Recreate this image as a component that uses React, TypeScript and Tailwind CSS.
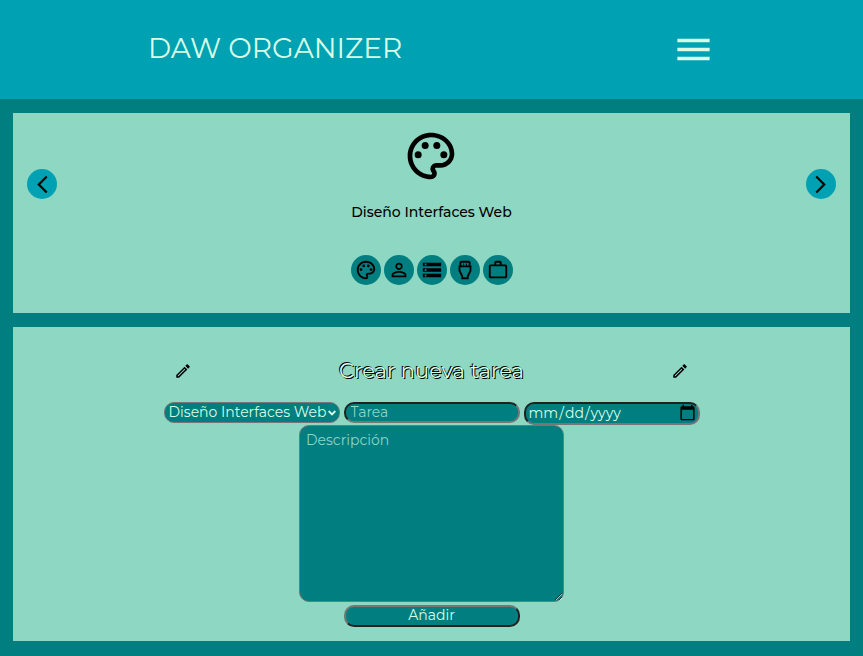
import { useState } from "react";
import {
  MdArrowBackIosNew,
  MdMenu,
  MdOutlineEdit,
  MdOutlinePalette,
  MdOutlineSettingsInputHdmi,
  MdOutlineWorkOutline,
  MdPersonOutline,
  MdStorage,
} from "react-icons/md";

const subjects = [
  { name: "Diseño Interfaces Web", Icon: MdOutlinePalette },
  { name: "Desarrollo Entorno Cliente", Icon: MdPersonOutline },
  { name: "Desarrollo Entorno Servidor", Icon: MdStorage },
  { name: "Despliegue Aplicaciones Web", Icon: MdOutlineSettingsInputHdmi },
  { name: "Empresa", Icon: MdOutlineWorkOutline },
];

const round =
  "flex size-[30px] shrink-0 items-center justify-center rounded-full text-black";

function Header() {
  return (
    <header className="flex h-[99px] items-center justify-between bg-[#00a1b3] px-[148px] text-[#d8ffe6]">
      <h1 className="pb-1 text-[28px] leading-9">DAW ORGANIZER</h1>
      <button type="button" aria-label="Menú">
        <MdMenu size={43} />
      </button>
    </header>
  );
}

function Carousel() {
  const [current, setCurrent] = useState(0);
  const { name, Icon } = subjects[current];
  const move = (step: number) =>
    setCurrent((current + step + subjects.length) % subjects.length);
  return (
    <section className="bg-[#8dd7c3] px-[14px] pt-[15px] pb-7">
      <div className="flex items-center justify-between">
        <button type="button" aria-label="Anterior" onClick={() => move(-1)} className={`${round} bg-[#00a1b3]`}>
          <MdArrowBackIosNew size={21} />
        </button>
        <div className="flex h-28 flex-col items-center gap-4 text-black">
          <Icon size={56} />
          <p className="text-[14px] leading-6 font-medium">{name}</p>
        </div>
        <button type="button" aria-label="Siguiente" onClick={() => move(1)} className={`${round} bg-[#00a1b3]`}>
          <MdArrowBackIosNew size={21} className="rotate-180" />
        </button>
      </div>
      <div className="mt-[15px] flex justify-center gap-[3px]">
        {subjects.map(({ name: label, Icon: Glyph }, i) => (
          <button key={label} type="button" aria-label={label} onClick={() => setCurrent(i)} className={`${round} bg-[#007e80]`}>
            <Glyph size={22} />
          </button>
        ))}
      </div>
    </section>
  );
}

function TaskForm() {
  return (
    <section className="bg-[#8dd7c3] px-[14px] pt-7 pb-[14px]">
      <div className="flex items-center justify-between px-[147px]">
        <MdOutlineEdit size={18} className="text-black" />
        <h2 className="text-[21px] leading-8 text-[#d8ffe6] [text-shadow:-1px_-1px_0_black,1px_1px_0_black]">
          Crear nueva tarea
        </h2>
        <MdOutlineEdit size={18} className="text-black" />
      </div>
      <form className="mt-[15px] flex flex-col items-center text-[14px] text-[#d8ffe6]" onSubmit={(e) => e.preventDefault()}>
        <div className="flex flex-wrap items-start justify-center gap-x-1">
          <div className="relative">
            <select aria-label="Asignatura" className="block h-[21px] w-[176px] appearance-none rounded-[10px] border border-[#767676] bg-[#007e80] pb-[2px] pl-1 leading-4">
              {subjects.map(({ name }) => (
                <option key={name}>{name}</option>
              ))}
            </select>
            <svg viewBox="0 0 8 6" className="pointer-events-none absolute top-2 right-1 h-[6px] w-2" fill="none" stroke="currentColor" strokeWidth="1.8">
              <path d="M0.7 1 L4 4.4 L7.3 1" />
            </svg>
          </div>
          <input aria-label="Tarea" placeholder="Tarea" className="h-[21px] w-[176px] rounded-[10px] border-2 border-[#767676] bg-[#007e80] px-[5px] pb-[2px] leading-4 [border-style:inset] placeholder:text-[#8dd7c3]" />
          <input aria-label="Fecha" type="date" className="h-[23px] w-[176px] rounded-[10px] border-2 border-[#767676] bg-[#007e80] px-[2px] pb-[2px] leading-4 [border-style:inset] [&::-webkit-calendar-picker-indicator]:size-[17px] [&::-webkit-calendar-picker-indicator]:bg-[length:17px_17px] [&::-webkit-calendar-picker-indicator]:p-0" />
        </div>
        <textarea aria-label="Descripción" placeholder="Descripción" className="h-[177px] w-[265px] rounded-[10px] border border-[#767676] bg-[#007e80] px-[6px] py-1 leading-5 placeholder:text-[#8dd7c3]" />
        <button type="submit" className="mt-[3px] h-[22px] w-[176px] rounded-[10px] border-2 border-[#767676] bg-[#007e80] pb-[2px] leading-4 [border-style:outset]">
          Añadir
        </button>
      </form>
    </section>
  );
}

export default function App() {
  return (
    <div className="min-h-screen bg-[#007e80] font-[Montserrat,Inter,sans-serif]">
      <Header />
      <main className="flex flex-col gap-[14px] px-[13px] py-[14px]">
        <Carousel />
        <TaskForm />
      </main>
    </div>
  );
}
